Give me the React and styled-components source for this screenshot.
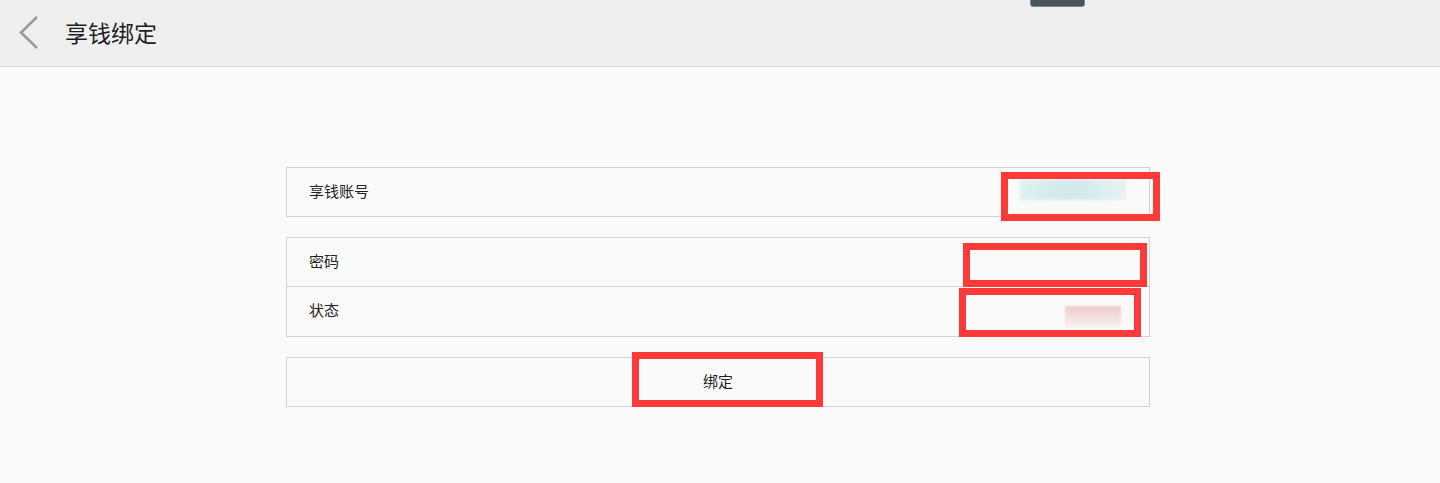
import React from 'react';
import styled, { createGlobalStyle } from 'styled-components';

const Global = createGlobalStyle`
  html, body {
    margin: 0;
    padding: 0;
    background: #fafafa;
    font-family: "Noto Sans CJK SC", "Noto Sans", sans-serif;
    color: #222;
  }
`;

const Page = styled.div`
  width: 1440px;
  min-height: 483px;
  background: #fafafa;
`;

const Header = styled.header`
  height: 66px;
  background: #efefef;
  border-bottom: 1px solid #d4d4d4;
  display: flex;
  align-items: center;
  position: relative;
`;

const Back = styled.button`
  width: 24px;
  height: 34px;
  margin-left: 18px;
  padding: 0;
  border: none;
  background: none;
  display: flex;
  align-items: center;
`;

const Title = styled.h1`
  margin: 0 0 2px 23px;
  font-size: 23px;
  font-weight: 400;
  color: #1e1e1e;
  line-height: 1;
`;

// the little dark tab sticking down from the top edge
const Tab = styled.div`
  position: absolute;
  top: -2px;
  left: 1030px;
  width: 53px;
  height: 7px;
  background: #4b535c;
  border: 1px solid #7a848d;
  border-radius: 0 0 3px 3px;
`;

const Body = styled.main`
  padding: 100px 0 0 286px;
  display: flex;
  flex-direction: column;
  gap: 20px;
`;

const Card = styled.section`
  position: relative;
  width: 862px;
  border: 1px solid #d2d2d2;
  background: #fafafa;
`;

const Row = styled.div`
  box-sizing: border-box;
  height: ${p => (p.$divider ? 50 : 48)}px;
  display: flex;
  align-items: center;
  padding-bottom: 4px;
  font-size: 15px;
  border-top: ${p => (p.$divider ? '1px solid #d2d2d2' : 'none')};
  justify-content: ${p => (p.$center ? 'center' : 'flex-start')};
  padding-left: ${p => (p.$center ? '0' : '22px')};
`;

// red annotation frame drawn over the screenshot
const Mark = styled.div`
  position: absolute;
  box-sizing: border-box;
  border: 7px solid #fc3a3a;
  left: ${p => p.$x}px;
  top: ${p => p.$y}px;
  width: ${p => p.$w}px;
  height: ${p => p.$h}px;
`;

// pixelated / redacted value
const Blur = styled.div`
  position: absolute;
  left: ${p => p.$x}px;
  top: ${p => p.$y}px;
  width: ${p => p.$w}px;
  height: ${p => p.$h}px;
  background: ${p => p.$bg};
  filter: blur(1px);
`;

export default function App() {
  return (
    <Page>
      <Global />
      <Header>
        <Tab />
        <Back aria-label="back">
          <svg width="22" height="34" viewBox="0 0 22 34">
            <polyline points="19,1 3,16.5 19,32" fill="none" stroke="#9a9a9a" strokeWidth="2.6" />
          </svg>
        </Back>
        <Title>享钱绑定</Title>
      </Header>
      <Body>
        <Card>
          <Row>享钱账号</Row>
          <Blur $x={733} $y={12} $w={106} $h={20} $bg="linear-gradient(90deg,#e0f1f1,#d2eaea 40%,#d4ebeb 60%,#e6f3f3)" />
          <Mark $x={714} $y={4} $w={159} $h={49} />
        </Card>
        <Card>
          <Row>密码</Row>
          <Row $divider>状态</Row>
          <Blur $x={778} $y={68} $w={56} $h={21} $bg="linear-gradient(180deg,#eccaca,#f4e2e2 60%,#f7eeee)" />
          <Mark $x={676} $y={5} $w={184} $h={44} />
          <Mark $x={672} $y={50} $w={182} $h={49} />
        </Card>
        <Card>
          <Row $center>绑定</Row>
          <Mark $x={345} $y={-6} $w={191} $h={55} />
        </Card>
      </Body>
    </Page>
  );
}
